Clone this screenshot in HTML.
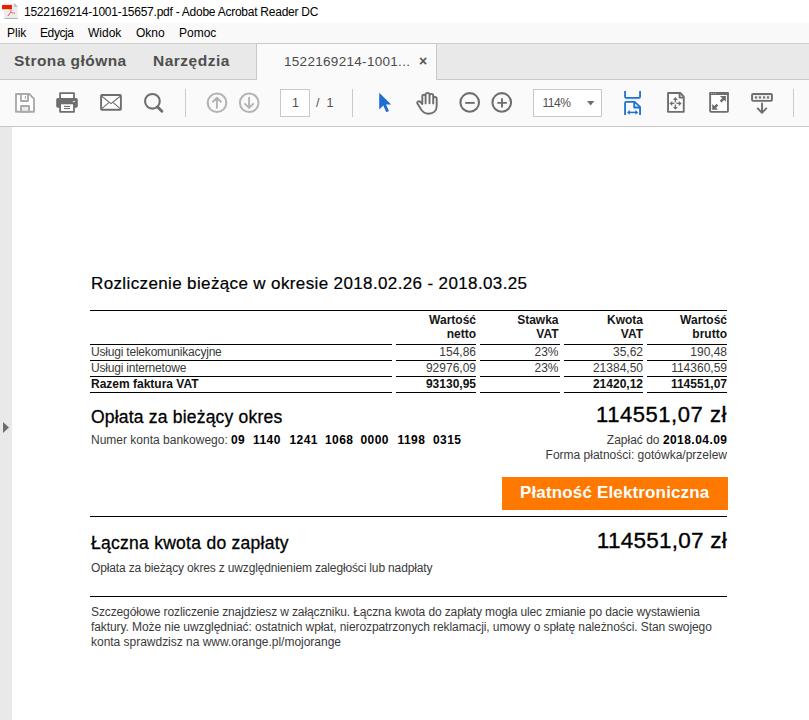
<!DOCTYPE html>
<html><head><meta charset="utf-8">
<style>
*{margin:0;padding:0;box-sizing:border-box}
html,body{width:809px;height:720px;overflow:hidden;background:#fff;font-family:"Liberation Sans",sans-serif}
.abs{position:absolute}
#title{left:0;top:0;width:809px;height:23px;background:#fff}
#menu{left:0;top:23px;width:809px;height:21px;background:#f9f9f9;border-bottom:1px solid #cfcfcf}
#tabs{left:0;top:44px;width:809px;height:36px;background:#e9e9e9;border-bottom:1px solid #c9c9c9}
#tab{left:256px;top:43px;width:181px;height:37px;background:#fafafa;border:1px solid #c9c9c9;border-bottom:none}
#tool{left:0;top:80px;width:809px;height:47px;background:#fafafa;border-bottom:1px solid #c6c6c6}
#doc{left:0;top:127px;width:809px;height:593px;background:#fff}
#strip{left:0;top:127px;width:12px;height:593px;background:#e9e9e9}
.t{position:absolute;white-space:nowrap;line-height:1}
.ui{color:#000;font-size:12px}
.sep{position:absolute;top:89px;width:1px;height:28px;background:#cacaca}
.d{color:#000}
.hl{position:absolute;height:1px;background:#000}
.th{position:absolute;text-align:right;font-size:12px;font-weight:bold;line-height:14px;color:#161616}
.rl{position:absolute;left:90px;width:637px;height:1px;background:linear-gradient(to right,#000 0,#000 302px,transparent 302px,transparent 306px,#000 306px,#000 386px,transparent 386px,transparent 390px,#000 390px,#000 470px,transparent 470px,transparent 474px,#000 474px,#000 553px,transparent 553px,transparent 557px,#000 557px)}
.tr{position:absolute;left:0;width:809px;height:14px;font-size:12px;line-height:12px;color:#3a3a3a}
.tr span{position:absolute;white-space:nowrap;top:0}
.tr .c{text-align:right}
.c1{left:91px;letter-spacing:-0.2px}
.c2{left:396px;width:80px}
.c3{left:480px;width:78.5px}
.c4{left:564px;width:79px}
.c5{left:647px;width:80px}
.b{font-weight:bold;color:#000}
.tr.b .c1{letter-spacing:0}
.tr.b{font-weight:bold;color:#111}
.sm{font-size:12px;color:#3a3a3a}
.sm.b{letter-spacing:0.45px;color:#000}
.med{-webkit-text-stroke:0.3px #000}
.foot{position:absolute;white-space:nowrap;font-size:12px;line-height:15.2px;color:#3a3a3a;letter-spacing:-0.12px}
</style></head><body>
<div id="title" class="abs"></div>
<div id="menu" class="abs"></div>
<div id="tabs" class="abs"></div>
<div id="tab" class="abs"></div>
<div id="tool" class="abs"></div>
<div id="doc" class="abs"></div>
<div id="strip" class="abs"></div>


<!-- pdf icon -->
<svg class="abs" style="left:0;top:0" width="22" height="23" viewBox="0 0 22 23">
 <path d="M4.2 3.2 H14.3 L17.8 6.7 V18.2 H4.2 Z" fill="#ececec"/>
 <path d="M14.3 3.2 L17.8 6.7 H14.3 Z" fill="#b5b5b5"/>
 <rect x="4.5" y="18" width="13.3" height="0.9" fill="#a8a8a8"/>
 <rect x="2" y="5" width="9.9" height="4.2" fill="#ee1c00"/>
 <path d="M11.2 9.3 C11.4 11.5 10.2 13.5 8.2 15.6 M10.3 12.2 C11.8 12.7 13.4 12.9 14.8 13.2 M8.2 15.6 C8.6 14.8 9.2 14.3 9.6 14" fill="none" stroke="#f0605a" stroke-width="0.9" stroke-linecap="round"/>
</svg>
<!-- title -->
<div class="t ui" style="left:24px;top:5.6px;font-size:12px;letter-spacing:-0.25px">1522169214-1001-15657.pdf - Adobe Acrobat Reader DC</div>
<!-- menu -->
<div class="t ui" style="left:7px;top:27px">Plik</div>
<div class="t ui" style="left:40px;top:27px;letter-spacing:-0.4px">Edycja</div>
<div class="t ui" style="left:88px;top:27px">Widok</div>
<div class="t ui" style="left:136px;top:27px">Okno</div>
<div class="t ui" style="left:179px;top:27px">Pomoc</div>
<!-- tabs -->
<div class="t" style="left:14px;top:53px;font-size:15.5px;font-weight:bold;color:#4f4f4f;letter-spacing:0.45px">Strona główna</div>
<div class="t" style="left:153px;top:53px;font-size:15.5px;font-weight:bold;color:#4f4f4f;letter-spacing:0.5px">Narzędzia</div>
<div class="t" style="left:284px;top:55px;font-size:13.5px;color:#4b4b4b;letter-spacing:0.3px">1522169214-1001...</div>
<div class="t" style="left:419px;top:54px;font-size:14px;font-weight:bold;color:#555">×</div>

<!-- toolbar separators -->
<div class="sep" style="left:185px"></div>
<div class="sep" style="left:352px"></div>
<div class="sep" style="left:793px"></div>

<!-- page box -->
<div class="abs" style="left:280px;top:89px;width:30px;height:28px;background:#fff;border:1px solid #c8c8c8"></div>
<div class="t" style="left:292px;top:97px;font-size:12.5px;color:#505050">1</div>
<div class="t" style="left:316px;top:97px;font-size:12.5px;color:#505050">/ &nbsp;1</div>
<!-- zoom box -->
<div class="abs" style="left:533px;top:89px;width:69px;height:28px;background:#fff;border:1px solid #c8c8c8"></div>
<div class="t" style="left:542.5px;top:96.8px;font-size:12px;color:#505050;letter-spacing:-0.5px">114%</div>


<!-- toolbar icons -->
<svg class="abs" style="left:0;top:80px" width="809" height="46" viewBox="0 80 809 46">
 <g stroke-linejoin="round">
 <!-- save -->
 <path d="M16 94 H29.2 L34 98.8 V111.7 H16 Z" fill="#fff" stroke="#aaa" stroke-width="1.9"/>
 <path d="M20.9 94 V101 H28 V94" fill="none" stroke="#aaa" stroke-width="1.9"/>
 <rect x="24.8" y="96" width="1.2" height="2.8" fill="#aaa"/>
 <rect x="21" y="106" width="8.1" height="5.8" fill="#ebebeb" stroke="#aaa" stroke-width="1.9"/>
 <!-- print -->
 <rect x="60.1" y="93.1" width="13.9" height="7.5" fill="#fff" stroke="#6e6e6e" stroke-width="1.8"/>
 <rect x="56.2" y="98.1" width="21.6" height="9.6" rx="1.6" fill="#6e6e6e"/>
 <rect x="60.1" y="103.5" width="13.9" height="8.3" fill="#fff" stroke="#6e6e6e" stroke-width="1.8"/>
 <rect x="61" y="104.2" width="12" height="0.8" fill="#ddd"/>
 <rect x="64" y="105.9" width="6" height="1.1" fill="#6e6e6e"/>
 <rect x="64" y="108" width="6" height="1.1" fill="#6e6e6e"/>
 <rect x="72.8" y="101" width="2.3" height="1.1" fill="#ddd"/>
 <!-- mail -->
 <rect x="101.1" y="95" width="19.8" height="14.8" rx="0.8" fill="#fff" stroke="#6e6e6e" stroke-width="1.9"/>
 <path d="M101.8 96.3 L111 103.6 L120.2 96.3 M101.8 108.6 L108.8 102.6 M113.2 102.6 L120.2 108.6" fill="none" stroke="#6e6e6e" stroke-width="1.1"/>
 <!-- search -->
 <circle cx="152.4" cy="101.3" r="7.35" fill="none" stroke="#6e6e6e" stroke-width="2.1"/>
 <path d="M157.6 106.9 L161.9 111.3" stroke="#6e6e6e" stroke-width="2.9" stroke-linecap="round"/>
 <!-- up / down -->
 <circle cx="217" cy="102.8" r="9.3" fill="none" stroke="#b3b3b3" stroke-width="2"/>
 <path d="M216.9 98 V107.9 M212.8 101.7 L216.9 97.7 L221 101.7" fill="none" stroke="#b3b3b3" stroke-width="1.9" stroke-linecap="round"/>
 <circle cx="249.2" cy="102.8" r="9.3" fill="none" stroke="#b3b3b3" stroke-width="2"/>
 <path d="M249.1 97.7 V107.6 M245 103.9 L249.1 107.9 L253.2 103.9" fill="none" stroke="#b3b3b3" stroke-width="1.9" stroke-linecap="round"/>
 <!-- select cursor -->
 <path d="M379.2 92.8 L379.2 109.6 L383.3 105.4 L386.3 112.3 L389 111.1 L386 104.5 L391.2 104.5 Z" fill="#1f6fd1"/>
 <!-- hand -->
 <path d="M422.3 104 V96.35 A1.65 1.65 0 0 1 425.6 96.35 V103.4 M425.6 103.4 V94.85 A1.95 1.95 0 0 1 429.5 94.85 V103.2 M429.5 103.2 V95.75 A1.85 1.85 0 0 1 433.2 95.75 V103.6 M433.2 103.6 V98.75 A1.75 1.75 0 0 1 436.7 98.75 V106 C436.7 111.2 433 113.7 428.5 113.7 C424.8 113.7 422.3 111.8 420.6 108.6 L417.4 103.6 C416.9 102.7 417.3 101.6 418.3 101.3 C419.2 101 420 101.4 420.6 102.1 L422.3 104" fill="none" stroke="#6e6e6e" stroke-width="1.9" stroke-linecap="round"/>
 <!-- zoom out / in -->
 <circle cx="469.7" cy="102.45" r="9.3" fill="none" stroke="#6e6e6e" stroke-width="2.1"/>
 <path d="M465.2 102.9 H474.7" stroke="#6e6e6e" stroke-width="1.9"/>
 <circle cx="501.75" cy="102.45" r="9.3" fill="none" stroke="#6e6e6e" stroke-width="2.1"/>
 <path d="M497.3 102.9 H506.9 M502 98.3 V107.5" stroke="#6e6e6e" stroke-width="1.9"/>
 <!-- zoom dropdown arrow -->
 <path d="M587 101.1 H594.3 L590.65 105.4 Z" fill="#6e6e6e"/>
 <!-- scroll mode (blue) -->
 <path d="M625.05 90.9 V96.8 Q625.05 97.9 626.1 97.9 H639 Q640.05 97.9 640.05 96.8 V90.9" fill="none" stroke="#1f6fd1" stroke-width="1.8"/>
 <path d="M625.05 114.9 V103 Q625.05 101.95 626.1 101.95 H634.6 L640.05 106.9 V114.9" fill="none" stroke="#1f6fd1" stroke-width="1.8"/>
 <path d="M634.2 102.3 V107.5 H639.8" fill="none" stroke="#1f6fd1" stroke-width="1.8"/>
 <rect x="625" y="99.4" width="15.5" height="0.9" fill="#1f6fd1" opacity="0.18"/>
 <path d="M628.5 112.4 H636.7" stroke="#1f6fd1" stroke-width="1.5"/>
 <path d="M627 112.4 L629.8 110.1 V114.7 Z M638.2 112.4 L635.4 110.1 V114.7 Z" fill="#1f6fd1"/>
 <!-- page move -->
 <path d="M668.05 93 H680.3 L683.75 96.6 V111.85 H668.05 Z" fill="#fff" stroke="#6e6e6e" stroke-width="1.9"/>
 <path d="M679.6 93 V97.6 H684" fill="none" stroke="#6e6e6e" stroke-width="1.9"/>
 <path d="M675.4 99.5 V102.4 M675.4 104.4 V107.4 M671.5 103.4 H674.4 M676.4 103.4 H679.4" stroke="#6e6e6e" stroke-width="1.4"/>
 <path d="M675.4 97.1 L677.9 100 H672.9 Z M675.4 109.8 L677.9 106.9 H672.9 Z M669.4 103.4 L672.3 100.9 V105.9 Z M681.7 103.4 L678.8 100.9 V105.9 Z" fill="#6e6e6e"/>
 <!-- fullscreen -->
 <rect x="710.15" y="93.4" width="17.8" height="18.45" rx="0.8" fill="#fff" stroke="#6e6e6e" stroke-width="1.9"/>
 <rect x="709.2" y="92" width="19.7" height="3.1" rx="0.8" fill="#6e6e6e"/>
 <circle cx="711.6" cy="93.6" r="0.5" fill="#ccc"/><circle cx="713.6" cy="93.6" r="0.5" fill="#ccc"/><circle cx="715.6" cy="93.6" r="0.5" fill="#ccc"/>
 <path d="M719.9 96.1 H725.9 V101.7 Z M712.2 104 V109.8 H718 Z" fill="#6e6e6e"/>
 <path d="M720.6 101.6 L723.6 98.6 M714.4 107.6 L717.4 104.6" stroke="#6e6e6e" stroke-width="2.6"/>
 <!-- collapse -->
 <rect x="752.05" y="94.05" width="19.9" height="6.8" rx="1" fill="#ececec" stroke="#6e6e6e" stroke-width="1.9"/>
 <rect x="755" y="96.4" width="2.1" height="2.1" fill="#6e6e6e"/><rect x="758.9" y="96.4" width="2.1" height="2.1" fill="#6e6e6e"/><rect x="763" y="96.4" width="2.1" height="2.1" fill="#6e6e6e"/><rect x="767" y="96.4" width="2.1" height="2.1" fill="#6e6e6e"/>
 <path d="M762 103.4 V112.6 M757.7 108.4 L762 112.8 L766.3 108.4" fill="none" stroke="#6e6e6e" stroke-width="1.9" stroke-linecap="round"/>
 </g>
</svg>

<!-- left arrow -->
<svg class="abs" style="left:0;top:415px" width="12" height="25"><path d="M3 7 L9 12.5 L3 18 Z" fill="#6e6e6e"/></svg>


<!-- document -->
<div class="t d" style="left:91px;top:275px;font-size:17px;letter-spacing:0.37px;-webkit-text-stroke:0.2px #000">Rozliczenie bieżące w okresie 2018.02.26 - 2018.03.25</div>
<div class="hl" style="left:90px;top:310px;width:637px"></div>
<!-- table header -->
<div class="th" style="left:396px;width:80px;top:313px">Wartość<br>netto</div>
<div class="th" style="left:480px;width:78.5px;top:313px">Stawka<br>VAT</div>
<div class="th" style="left:564px;width:79px;top:313px">Kwota<br>VAT</div>
<div class="th" style="left:647px;width:80px;top:313px">Wartość<br>brutto</div>
<!-- row lines -->
<div class="rl" style="top:344px"></div>
<div class="rl" style="top:360px"></div>
<div class="rl" style="top:376px"></div>
<div class="rl" style="top:392px"></div>
<!-- rows -->
<div class="tr" style="top:346px"><span class="c1">Usługi telekomunikacyjne</span><span class="c c2">154,86</span><span class="c c3">23%</span><span class="c c4">35,62</span><span class="c c5">190,48</span></div>
<div class="tr" style="top:362px"><span class="c1">Usługi internetowe</span><span class="c c2">92976,09</span><span class="c c3">23%</span><span class="c c4">21384,50</span><span class="c c5">114360,59</span></div>
<div class="tr b" style="top:378px"><span class="c1">Razem faktura VAT</span><span class="c c2">93130,95</span><span class="c c3"></span><span class="c c4">21420,12</span><span class="c c5">114551,07</span></div>

<div class="t d med" style="left:91px;top:408.5px;font-size:17.5px;letter-spacing:0.2px">Opłata za bieżący okres</div>
<div class="t d" style="right:82px;top:404px;font-size:22px;letter-spacing:0.55px;-webkit-text-stroke:0.35px #000" id="amt1">114551,07 zł</div>
<div class="t sm" style="left:91px;top:434px">Numer konta bankowego:</div>
<div class="t sm b" style="left:231px;top:434px">09</div>
<div class="t sm b" style="left:253px;top:434px">1140</div>
<div class="t sm b" style="left:289.5px;top:434px">1241</div>
<div class="t sm b" style="left:325px;top:434px">1068</div>
<div class="t sm b" style="left:360.5px;top:434px">0000</div>
<div class="t sm b" style="left:397.5px;top:434px">1198</div>
<div class="t sm b" style="left:433px;top:434px">0315</div>
<div class="t sm" style="right:82px;top:434px">Zapłać do <b style="letter-spacing:0.45px;color:#000">2018.04.0<span style="letter-spacing:0">9</span></b></div>
<div class="t sm" style="right:82px;top:449px">Forma płatności: gotówka/przelew</div>

<div class="abs" style="left:502px;top:477px;width:226px;height:33px;background:#ff7900"></div>
<div class="t" style="left:520px;top:484px;font-size:17px;font-weight:bold;color:#fff;letter-spacing:0.15px">Płatność Elektroniczna</div>
<div class="hl" style="left:90px;top:516px;width:637px"></div>

<div class="t d med" style="left:91px;top:535px;font-size:17.5px;letter-spacing:0.27px">Łączna kwota do zapłaty</div>
<div class="t d" style="right:82px;top:530px;font-size:22.5px;letter-spacing:0.25px;-webkit-text-stroke:0.35px #000">114551,07 zł</div>
<div class="t sm" style="left:91px;top:562px;letter-spacing:-0.15px">Opłata za bieżący okres z uwzględnieniem zaległości lub nadpłaty</div>

<div class="hl" style="left:90px;top:596px;width:637px"></div>
<div class="foot" style="left:91px;top:605px"><span style="letter-spacing:-0.12px">Szczegółowe rozliczenie znajdziesz w załączniku. Łączna kwota do zapłaty mogła ulec zmianie po dacie wystawienia</span><br><span style="letter-spacing:-0.08px">faktury. Może nie uwzględniać: ostatnich wpłat, nierozpatrzonych reklamacji, umowy o spłatę należności. Stan swojego</span><br><span style="letter-spacing:-0.02px">konta sprawdzisz na www.orange.pl/mojorange</span></div>
</body></html>
